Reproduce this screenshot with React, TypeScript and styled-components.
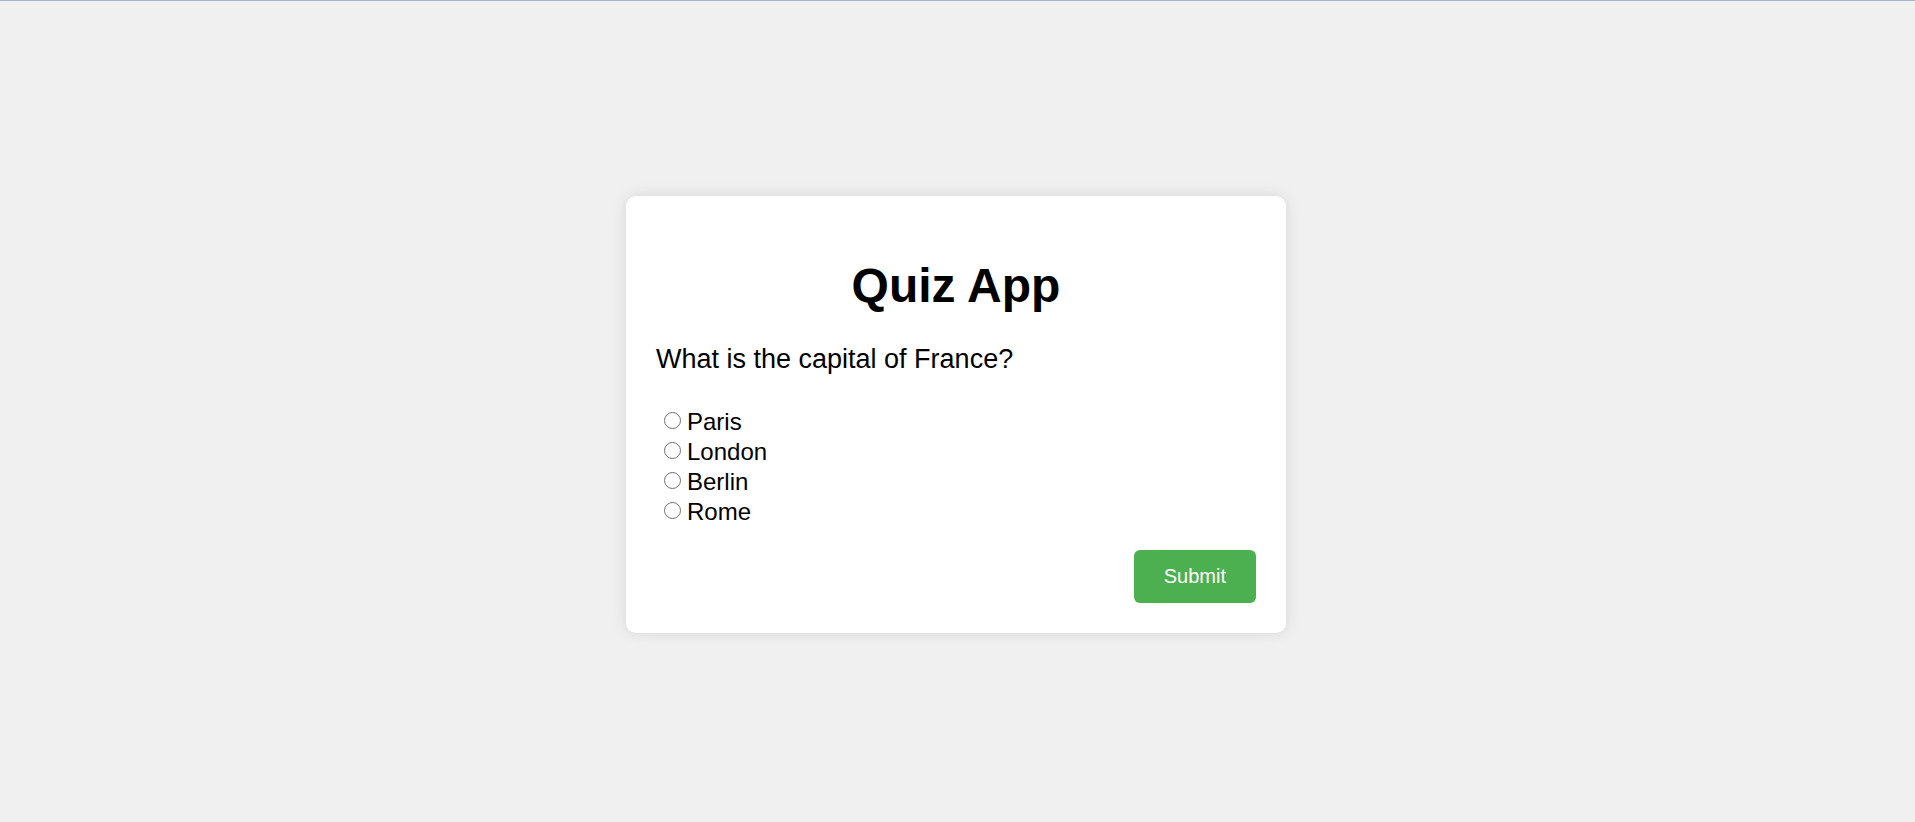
import React, { useState } from "react";
import styled, { createGlobalStyle } from "styled-components";

const GlobalStyle = createGlobalStyle`
  html, body {
    margin: 0;
    padding: 0;
    background: #f0f0f0;
  }
  body {
    font-family: "Liberation Sans", Arial, sans-serif;
    color: #000;
  }
  * { box-sizing: border-box; }
`;

const Page = styled.div`
  min-height: 100vh;
  border-top: 1px solid #a3b2d2;
  padding: 6px 3px 0 0;
  display: flex;
  align-items: center;
  justify-content: center;
  background: #f0f0f0;
`;

const Card = styled.div`
  width: 660px;
  padding: 30px;
  background: #ffffff;
  border-radius: 10px;
  box-shadow: 0 0 15px rgba(0, 0, 0, 0.1);
  display: flex;
  flex-direction: column;
`;

const Title = styled.h1`
  margin: 32px 0 30px;
  font-size: 48px;
  line-height: 56px;
  font-weight: 700;
  text-align: center;
`;

const Question = styled.p`
  margin: 0 0 32px;
  font-size: 27px;
  line-height: 31px;
`;

const Options = styled.div`
  display: flex;
  flex-direction: column;
`;

const Option = styled.label`
  display: block;
  font-size: 24px;
  line-height: 30px;
  height: 30px;
  cursor: pointer;
`;

const Radio = styled.input`
  appearance: none;
  -webkit-appearance: none;
  display: inline-block;
  width: 17px;
  height: 17px;
  margin: 4px 6px 1px 8px;
  border: 1.5px solid #6f6f6f;
  border-radius: 50%;
  background: #ffffff;
  vertical-align: baseline;
  cursor: pointer;

  &:checked {
    border-color: #0075ff;
    background: radial-gradient(circle, #0075ff 0 4px, #ffffff 4.5px);
  }
`;

const Footer = styled.div`
  display: flex;
  justify-content: flex-end;
  margin-top: 23px;
`;

const SubmitButton = styled.button`
  background: #4caf50;
  color: #ffffff;
  border: none;
  border-radius: 6px;
  padding: 15px 30px;
  font-family: "Liberation Sans", Arial, sans-serif;
  font-size: 20px;
  line-height: 23px;
  cursor: pointer;
`;

const options = ["Paris", "London", "Berlin", "Rome"];

export default function App() {
  const [selected, setSelected] = useState<string | null>(null);
  return (
    <>
      <GlobalStyle />
      <Page>
        <Card>
          <Title>Quiz App</Title>
          <Question>What is the capital of France?</Question>
          <Options>
            {options.map((o) => (
              <Option key={o}>
                <Radio
                  type="radio"
                  name="answer"
                  value={o}
                  checked={selected === o}
                  onChange={() => setSelected(o)}
                />
                {o}
              </Option>
            ))}
          </Options>
          <Footer>
            <SubmitButton type="button">Submit</SubmitButton>
          </Footer>
        </Card>
      </Page>
    </>
  );
}
